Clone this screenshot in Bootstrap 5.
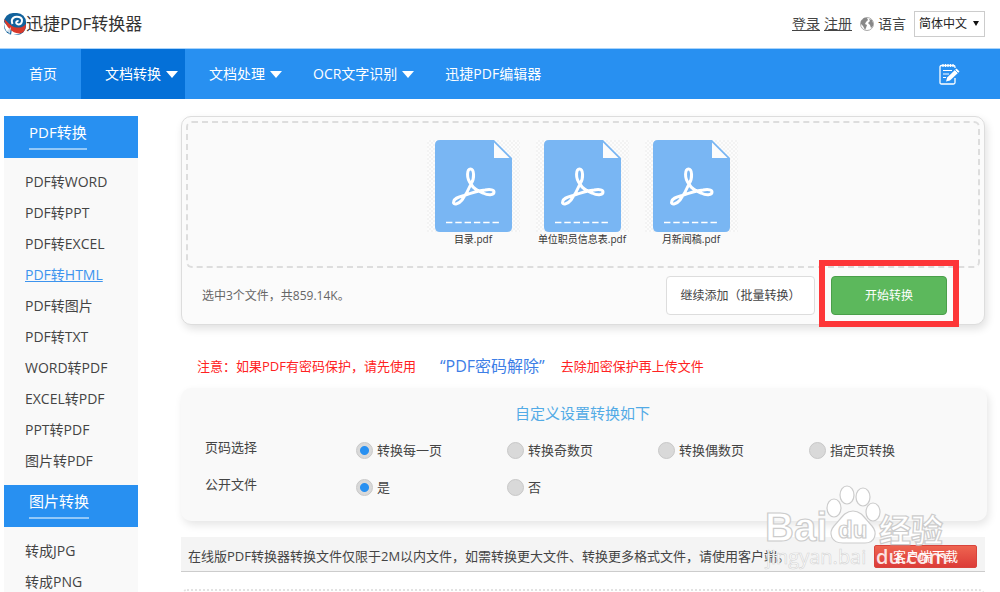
<!DOCTYPE html>
<html lang="zh-CN">
<head>
<meta charset="utf-8">
<meta name="viewport" content="width=device-width, initial-scale=1">
<title>迅捷PDF转换器</title>
<link href="https://cdn.jsdelivr.net/npm/bootstrap@5.3.0/dist/css/bootstrap.min.css" rel="stylesheet">
<style>
  body { font-family: "Open Sans", "Noto Sans CJK SC", sans-serif; font-size: 14px; line-height: 20px; color: #444; background: #fff; overflow-x: hidden; }
  a { color: inherit; }
  .site-head { height: 48px; padding: 0 15px 0 4px; }
  .brand-name { font-size: 17px; color: #333; }
  .lang-select { width: 71px; height: 26px; font-size: 12px; line-height: 24px; padding: 0 0 0 4px; border: 1px solid #ccc; background: #fff; color: #222; appearance: none; }
  .lang-wrap::after { content: ""; position: absolute; right: 6px; top: 10px; border: 3px solid transparent; border-top: 5px solid #111; border-bottom: 0; pointer-events: none; }
  .main-nav { min-height: 51px; background: #2890f1; color: #fff; padding: 0 40px 0 0; border-top: 1px solid #a9d3fa; }
  .main-nav .item { padding: 15px 7px 15px 24px; color: #fff; text-decoration: none; display: flex; align-items: center; gap: 5px; }
  .main-nav .item.home { padding-left: 29px; padding-right: 24px; }
  .main-nav .item.on { background: #0470d8; }
  .tri { border: 6px solid transparent; border-top: 7px solid #fff; border-bottom: 0; }
  .page-body { padding: 17px 15px 0 4px; gap: 43px; }
  .side { width: 134px; background: #f9f9f9; flex: none; }
  .side h2 { font-size: 15px; line-height: 20px; font-weight: 400; color: #fff; background: #2890f1; margin: 0; padding: 6px 25px; height: 42px; }
  .side h2 span { display: inline-block; padding-bottom: 6px; border-bottom: 2px solid #93c8f8; }
  .side ul { padding: 8px 0 9px 21px; margin: 0; list-style: none; }
  .side li { line-height: 31px; }
  .side li a { text-decoration: none; }
  .side li a.here { color: #3d94ee; text-decoration: underline; }
  .upload { border: 1px solid #ddd; border-radius: 10px; background: #fbfbfb; padding: 4px; box-shadow: 2px 4px 8px rgba(0,0,0,.12); }
  .drop { border: 2px dashed #ddd; border-radius: 6px; background: #fafafa; padding: 17px 2px 20px 0; gap: 16px; }
  .file { width: 93px; font-size: 10px; line-height: 14px; white-space: nowrap; color: #333; }
  .thumb { background: repeating-conic-gradient(#f3f3f3 0 25%, #fcfcfc 0 50%) 0 0 / 4px 4px; height: 92px; }
  .actions { padding: 8px 33px 5px 16px; font-size: 12px; color: #666; }
  .actions button { font-size: 12px; height: 39px; border-radius: 4px; padding: 0; }
  .btn-more { width: 149px; background: #fff; border: 1px solid #ddd; color: #444; }
  .btn-go { width: 116px; background: #5cb85c; border: 1px solid #4a9f4a; color: #fff; }
  .ring { position: absolute; inset: -16px -12px -12px; border: 6px solid #fd3638; pointer-events: none; }
  .notice { color: #f22; font-size: 13px; padding: 31px 0 12px 16px; }
  .notice a { color: #3d7ee6; font-size: 16px; text-decoration: none; margin: 0 16px 0 24px; }
  .settings { background: #f9f9f9; border-radius: 10px; box-shadow: 2px 4px 8px rgba(0,0,0,.1); margin-right: -2px; padding: 14px 27px 10px 24px; }
  .settings h3 { font-size: 15px; line-height: 22px; font-weight: 400; color: #53abe6; margin: 0 0 13px; text-align: center; }
  .settings fieldset { height: 37px; font-size: 13px; }
  .settings label { display: flex; align-items: center; gap: 4px; line-height: 26px; }
  .settings input { appearance: none; width: 17px; height: 17px; border-radius: 50%; border: 1px solid #c8c8c8; background: #d9d9d9; margin: 0; }
  .settings input:checked { background: radial-gradient(circle, #2890f1 0 4px, #d9d9d9 5px); }
  .client { background: #f4f4f4; border-bottom: 1px solid #ccc; margin-top: 16px; height: 35px; padding: 4px 8px 0 7px; font-size: 13px; }
  .btn-client { width: 103px; height: 23px; font-size: 13px; line-height: 20px; padding: 0; border: 1px solid #d8443c; border-radius: 2px; background: linear-gradient(#ee6450, #dc3c38); color: #fff; }
  .dash-next { border-top: 2px dotted #e2e2e2; border-radius: 8px; margin-top: 17px; height: 12px; }
  .stamp { position: absolute; right: 35px; bottom: -2px; pointer-events: none; }
</style>
</head>
<body>
<header class="site-head d-flex align-items-center justify-content-between">
  <div class="d-flex align-items-center">
    <svg width="22" height="22" viewBox="0 0 22 22" aria-hidden="true">
      <rect width="22" height="22" rx="9" fill="#12629c"/>
      <path d="M0 9C3 13 8 18 18 18.500C16 22 9 22 7 22L8 15L3 19C1 16 0 13 0 9Z" fill="#fff"/>
      <path d="M0 6C4 9 8 15 13 14.500C17 15 19 14 22 11C22 17 19 21 15 20.500C8 20 2 14 0 6Z" fill="#d8392a"/>
      <path d="M8.500 11C6 5 11 3 15 4C20 5.500 18 11.500 14.500 11.500C11 11 12 7.500 14.500 8" fill="none" stroke="#fff" stroke-width="2"/>
      <path d="M3 18L7 14L6 21Z" fill="#cdddea"/>
    </svg>
    <span class="brand-name">迅捷PDF转换器</span>
  </div>
  <div class="d-flex align-items-center">
    <a href="#" class="me-1">登录</a>
    <a href="#" class="me-2">注册</a>
    <svg width="14" height="14" viewBox="0 0 14 14" aria-hidden="true" class="me-1">
      <circle cx="7" cy="7" r="6.500" fill="#fff" stroke="#aaa"/>
      <path d="M1 4L4 1L7 1L8 3L6 5L5 7L7 8L6 11L5 13L3 9L1 7Z" fill="#888"/>
      <path d="M9 2L12 3L13 6L13 9L11 11L10 8L8 6L10 4Z" fill="#888"/>
    </svg>
    <label for="lang" class="me-2">语言</label>
    <div class="lang-wrap position-relative">
      <select id="lang" class="lang-select d-block"><option>简体中文</option></select>
    </div>
  </div>
</header>
<nav class="main-nav d-flex align-items-stretch">
  <a href="#" class="item home">首页</a>
  <a href="#" class="item on">文档转换<i class="tri"></i></a>
  <a href="#" class="item">文档处理<i class="tri"></i></a>
  <a href="#" class="item">OCR文字识别<i class="tri"></i></a>
  <a href="#" class="item">迅捷PDF编辑器</a>
  <a href="#" class="ms-auto d-flex align-items-center" aria-label="反馈">
    <svg width="21" height="22" viewBox="0 0 21 22" fill="none" stroke="#fff">
      <path d="M16 15V19.500Q16 21 14.500 21H2.500Q1 21 1 19.500V4Q1 2.500 2.500 2.500H14.500Q16 2.500 16 4V5" stroke-width="1.300"/>
      <path d="M4 1V4M6.500 1V4M9 1V4M11.500 1V4M14 1V4" stroke-width="1.200"/>
      <path d="M4 7.500H13M4 11H10M4 14.500H7" stroke-width="1.100"/>
      <path d="M7 18.500L8.200 14.500L17.500 5.500L20.500 8.500L11 17.500Z" fill="#fff" stroke="none"/>
      <path d="M16 7L19 10" stroke="#2890f1" stroke-width=".8"/>
    </svg>
  </a>
</nav>
<div class="page-body d-flex">
  <aside class="side">
    <h2><span>PDF转换</span></h2>
    <ul>
      <li><a href="#">PDF转WORD</a></li>
      <li><a href="#">PDF转PPT</a></li>
      <li><a href="#">PDF转EXCEL</a></li>
      <li><a href="#" class="here">PDF转HTML</a></li>
      <li><a href="#">PDF转图片</a></li>
      <li><a href="#">PDF转TXT</a></li>
      <li><a href="#">WORD转PDF</a></li>
      <li><a href="#">EXCEL转PDF</a></li>
      <li><a href="#">PPT转PDF</a></li>
      <li><a href="#">图片转PDF</a></li>
    </ul>
    <h2><span>图片转换</span></h2>
    <ul>
      <li><a href="#">转成JPG</a></li>
      <li><a href="#">转成PNG</a></li>
    </ul>
  </aside>
  <main class="flex-grow-1 position-relative">
    <svg width="0" height="0" class="position-absolute" aria-hidden="true">
      <symbol id="pdf" viewBox="0 0 77 92">
        <path d="M5 0H59L77 18V87Q77 92 72 92H5Q0 92 0 87V5Q0 0 5 0Z" fill="#79b6f3"/>
        <path d="M59 2.500V18H74.500Z" fill="#fcfcfc"/>
        <path d="M36 44C31 38 32 29 35.500 29C39 29 40 38 36 44C33 51 30 56 27 60C23 65 18 65 18.500 62C19 58 24 57 29 55.500C36 53 43 51 50 50C56 49 59 50 59 52C59 55.500 53 55.500 48 53C43 51 38 48 36 44Z" fill="none" stroke="#fff" stroke-width="3"/>
        <path d="M11 82.500H64" stroke="#fff" stroke-width="1.600" stroke-dasharray="6.400 2.900"/>
      </symbol>
    </svg>
    <section class="upload">
      <div class="drop d-flex justify-content-center">
        <div class="file d-flex flex-column align-items-center"><div class="thumb w-100"><svg width="77" height="92" class="d-block mx-auto"><use href="#pdf"/></svg></div><span>目录.pdf</span></div>
        <div class="file d-flex flex-column align-items-center"><div class="thumb w-100"><svg width="77" height="92" class="d-block mx-auto"><use href="#pdf"/></svg></div><span>单位职员信息表.pdf</span></div>
        <div class="file d-flex flex-column align-items-center"><div class="thumb w-100"><svg width="77" height="92" class="d-block mx-auto"><use href="#pdf"/></svg></div><span>月新闻稿.pdf</span></div>
      </div>
      <div class="actions d-flex align-items-center">
        <span class="me-auto">选中3个文件，共859.14K。</span>
        <button type="button" class="btn btn-more me-3">继续添加（批量转换）</button>
        <div class="position-relative">
          <button type="button" class="btn btn-go d-block">开始转换</button>
          <span class="ring"></span>
        </div>
      </div>
    </section>
    <div class="notice d-flex align-items-center">
      <span>注意：如果PDF有密码保护，请先使用</span>
      <a href="#">“PDF密码解除”</a>
      <span>去除加密保护再上传文件</span>
    </div>
    <form class="settings">
      <h3>自定义设置转换如下</h3>
      <fieldset class="row row-cols-5 g-0">
        <div>页码选择</div>
        <div><label><input type="radio" name="pages" checked>转换每一页</label></div>
        <div><label><input type="radio" name="pages">转换奇数页</label></div>
        <div><label><input type="radio" name="pages">转换偶数页</label></div>
        <div><label><input type="radio" name="pages">指定页转换</label></div>
      </fieldset>
      <fieldset class="row row-cols-5 g-0">
        <div>公开文件</div>
        <div><label><input type="radio" name="open" checked>是</label></div>
        <div><label><input type="radio" name="open">否</label></div>
      </fieldset>
    </form>
    <div class="client d-flex align-items-center justify-content-between position-relative">
      <span>在线版PDF转换器转换文件仅限于2M以内文件，如需转换更大文件、转换更多格式文件，请使用客户端。</span>
      <button type="button" class="btn btn-client">客户端下载</button>
      <svg class="stamp" width="186" height="96" viewBox="0 0 186 96" style="font-family:'Liberation Sans','Noto Sans CJK SC',sans-serif" aria-hidden="true">
        <g fill="#fff" stroke="#ccc" stroke-width="1.200">
          <ellipse cx="70" cy="31" rx="7" ry="9"/><ellipse cx="83" cy="18" rx="7" ry="9"/>
          <ellipse cx="99" cy="20" rx="7" ry="9"/><ellipse cx="109" cy="35" rx="7" ry="9"/>
          <path d="M89 34C98 34 101 42 108 49C114 56 111 66 101 66H79C67 66 64 56 70 49C77 42 80 34 89 34Z"/>
          <text x="1" y="64" font-size="40" font-weight="700">Bai</text>
          <text x="115" y="65" font-size="32" font-weight="700">经验</text>
          <text x="74" y="61" font-size="24" font-weight="700">du</text>
        </g>
        <text x="2" y="87" font-size="20" fill="#fff" stroke="#d4d4d4" stroke-width=".6" font-family="Open Sans">jingyan.bai</text>
        <text x="112" y="87" font-size="20" fill="#fff" fill-opacity=".85" font-family="Open Sans" font-weight="600">du.com</text>
      </svg>
    </div>
    <div class="dash-next"></div>
  </main>
</div>
<script src="https://cdn.jsdelivr.net/npm/bootstrap@5.3.0/dist/js/bootstrap.bundle.min.js"></script>
</body>
</html>
